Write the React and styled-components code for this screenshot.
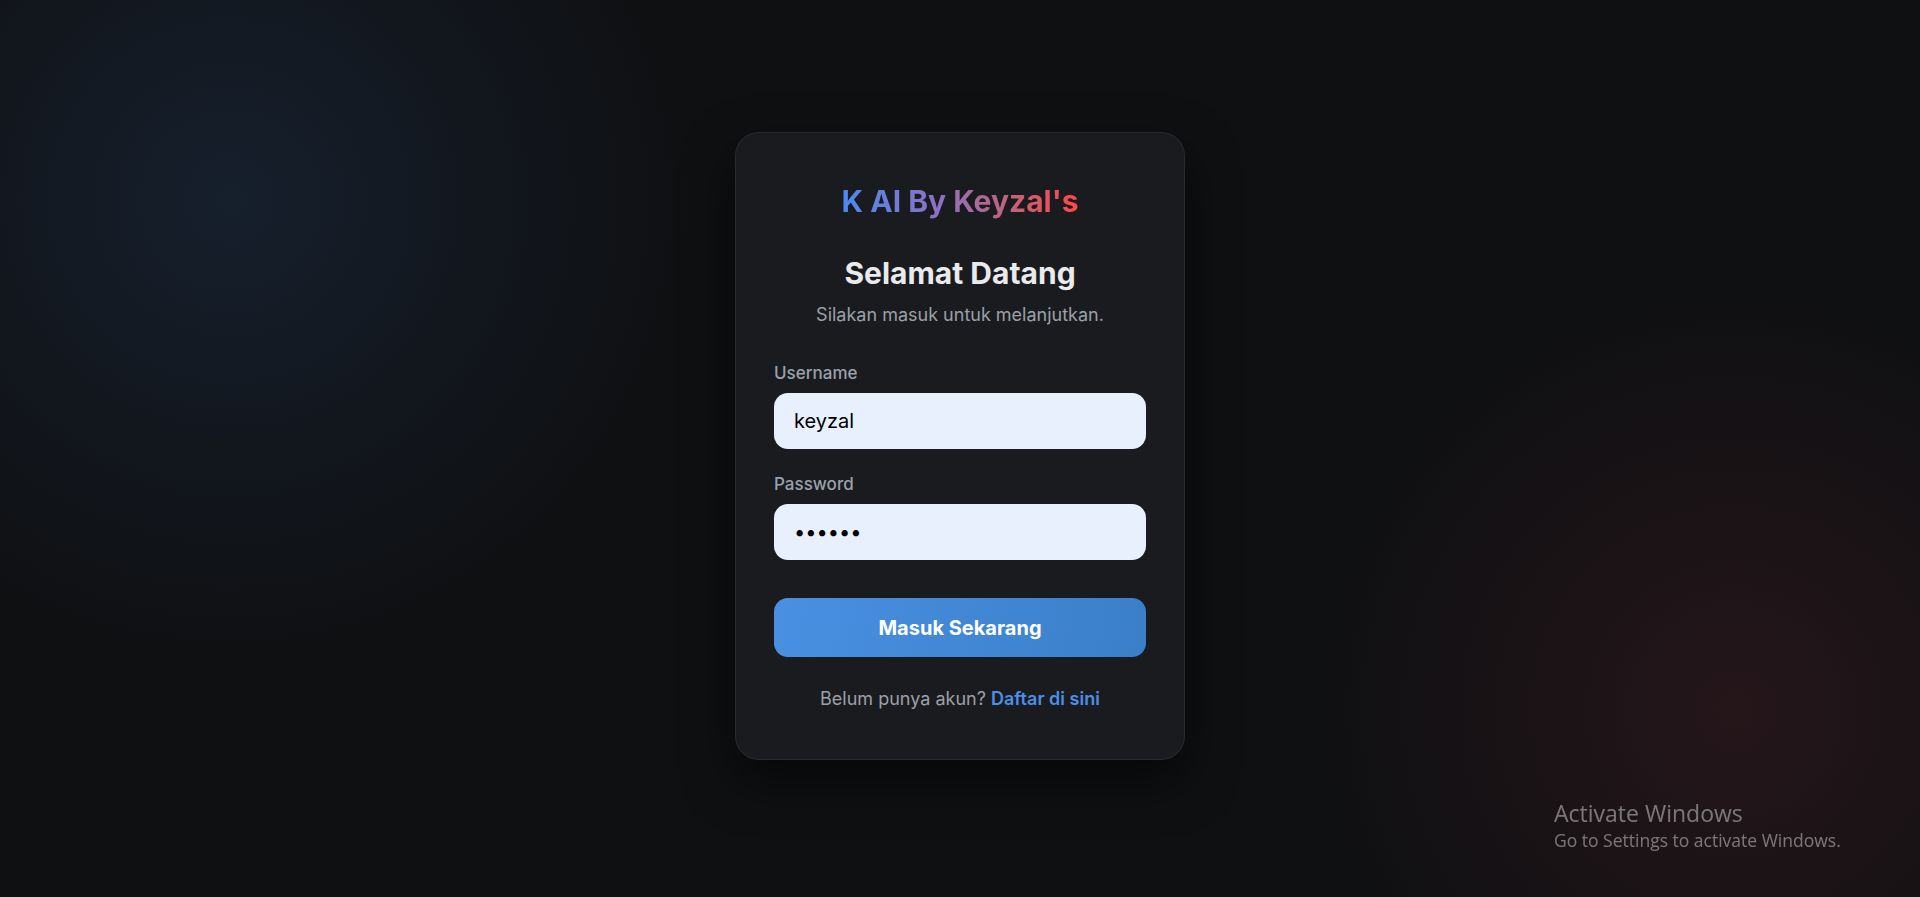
import React from "react";
import styled, { createGlobalStyle } from "styled-components";

const Global = createGlobalStyle`
  * { box-sizing: border-box; }
  html, body { margin: 0; padding: 0; }
  body {
    font-family: Inter, "Noto Sans", sans-serif;
    background: #0f1012;
    min-height: 100vh;
  }
`;

const Page = styled.main`
  min-height: 897px;
  display: flex;
  align-items: flex-start;
  justify-content: center;
  padding-top: 132px;
  background:
    radial-gradient(circle at 230px 200px, rgba(22, 32, 46, 0.95) 0px, rgba(22, 32, 46, 0) 460px),
    radial-gradient(circle at 1735px 710px, rgba(38, 22, 26, 0.95) 0px, rgba(38, 22, 26, 0) 420px),
    #0f1012;
`;

const Card = styled.section`
  width: 450px;
  background: #1a1b1e;
  border: 1px solid rgba(255, 255, 255, 0.07);
  border-radius: 24px;
  padding: 38px 38px 48px;
  box-shadow: 0 20px 50px rgba(0, 0, 0, 0.55);
  display: flex;
  flex-direction: column;
`;

const Brand = styled.h1`
  margin: 12px 0 0;
  text-align: center;
  font-size: 30px;
  line-height: 36px;
  font-weight: 700;
  letter-spacing: 0;
  background: linear-gradient(90deg, #4a8af0 0%, #8a72c4 40%, #c0637e 70%, #ff4848 100%);
  -webkit-background-clip: text;
  background-clip: text;
  color: transparent;
  align-self: center;
`;

const Heading = styled.h2`
  margin: 36px 0 0;
  text-align: center;
  font-size: 30px;
  line-height: 36px;
  font-weight: 700;
  color: #e9eaec;
`;

const Sub = styled.p`
  margin: 12px 0 0;
  text-align: center;
  font-size: 18px;
  line-height: 24px;
  color: #9aa0a8;
`;

const Form = styled.form`
  margin-top: 36px;
  display: flex;
  flex-direction: column;
`;

const Field = styled.div`
  display: flex;
  flex-direction: column;
  gap: 10px;
  margin-bottom: ${(p) => p.$mb || "25px"};
`;

const Label = styled.label`
  font-size: 17px;
  line-height: 20px;
  font-weight: 500;
  color: #9aa2ad;
`;

const Input = styled.input`
  height: 56px;
  width: 100%;
  border: none;
  outline: none;
  border-radius: 14px;
  background: #e8f0fe;
  padding: 0 20px;
  font-family: Inter, "Noto Sans", sans-serif;
  font-size: 20px;
  color: #000;
`;

const Button = styled.button`
  margin-top: 14px;
  height: 59px;
  border: none;
  border-radius: 14px;
  background: linear-gradient(100deg, #4a90e2 0%, #3a7fc8 100%);
  color: #fff;
  font-family: Inter, "Noto Sans", sans-serif;
  font-size: 20px;
  font-weight: 700;
  cursor: pointer;
`;

const Footer = styled.p`
  margin: 30px 0 0;
  text-align: center;
  font-size: 18px;
  line-height: 24px;
  color: #9aa0a8;
`;

const Link = styled.a`
  color: #4a8fe8;
  font-weight: 600;
  text-decoration: none;
`;

const Watermark = styled.div`
  position: fixed;
  left: 1554px;
  top: 797px;
  font-family: "Open Sans", "Noto Sans", sans-serif;
  color: rgba(255, 255, 255, 0.42);
  pointer-events: none;
`;

const WmTitle = styled.div`
  font-size: 23px;
  line-height: 32px;
`;

const WmSub = styled.div`
  font-size: 17.5px;
  line-height: 22px;
`;

export default function App() {
  return (
    <>
      <Global />
      <Page>
        <Card>
          <Brand>K AI By Keyzal's</Brand>
          <Heading>Selamat Datang</Heading>
          <Sub>Silakan masuk untuk melanjutkan.</Sub>
          <Form onSubmit={(e) => e.preventDefault()}>
            <Field>
              <Label>Username</Label>
              <Input type="text" defaultValue="keyzal" />
            </Field>
            <Field $mb="24px">
              <Label>Password</Label>
              <Input type="password" defaultValue="keyzal" />
            </Field>
            <Button type="submit">Masuk Sekarang</Button>
          </Form>
          <Footer>
            Belum punya akun? <Link href="#">Daftar di sini</Link>
          </Footer>
        </Card>
      </Page>
      <Watermark>
        <WmTitle>Activate Windows</WmTitle>
        <WmSub>Go to Settings to activate Windows.</WmSub>
      </Watermark>
    </>
  );
}
